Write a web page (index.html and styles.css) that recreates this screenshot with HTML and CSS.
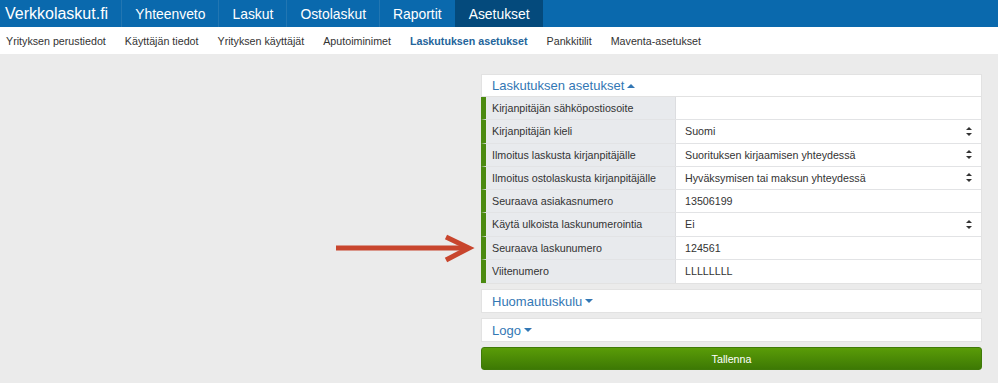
FILE: index.html
```html
<!DOCTYPE html>
<html lang="fi">
	<head>
		<meta charset="utf-8">
		<title>Laskutuksen asetukset - Verkkolaskut.fi</title>
		<link rel="stylesheet" href="styles.css">
	</head>
	<body>
		<div class="topnav">
			<a class="brand" href="#">Verkkolaskut.fi</a>
			<a class="nav-item" href="#">Yhteenveto</a>
			<a class="nav-item" href="#">Laskut</a>
			<a class="nav-item" href="#">Ostolaskut</a>
			<a class="nav-item" href="#">Raportit</a>
			<a class="nav-item active" href="#">Asetukset</a>
		</div>
		<div class="subnav">
			<a href="#">Yrityksen perustiedot</a>
			<a href="#">Käyttäjän tiedot</a>
			<a href="#">Yrityksen käyttäjät</a>
			<a href="#">Aputoiminimet</a>
			<a href="#" class="current">Laskutuksen asetukset</a>
			<a href="#">Pankkitilit</a>
			<a href="#">Maventa-asetukset</a>
		</div>

		<div class="content">
			<svg class="pointer" width="150" height="34" viewBox="0 0 150 34">
				<line x1="0" y1="17" x2="132" y2="17" stroke="#c8452d" stroke-width="5"/>
				<polyline points="110,6 133,17 110,29" fill="none" stroke="#c8452d" stroke-width="5" stroke-linejoin="miter"/>
			</svg>

			<form class="settings">
				<div class="panel">
					<div class="panel-title">Laskutuksen asetukset <span class="caret up"></span></div>
					<div class="row">
						<div class="label">Kirjanpitäjän sähköpostiosoite</div>
						<div class="field"></div>
					</div>
					<div class="row">
						<div class="label">Kirjanpitäjän kieli</div>
						<div class="field select">Suomi <span class="updown"></span></div>
					</div>
					<div class="row">
						<div class="label">Ilmoitus laskusta kirjanpitäjälle</div>
						<div class="field select">Suorituksen kirjaamisen yhteydessä <span class="updown"></span></div>
					</div>
					<div class="row">
						<div class="label">Ilmoitus ostolaskusta kirjanpitäjälle</div>
						<div class="field select">Hyväksymisen tai maksun yhteydessä <span class="updown"></span></div>
					</div>
					<div class="row">
						<div class="label">Seuraava asiakasnumero</div>
						<div class="field">13506199</div>
					</div>
					<div class="row">
						<div class="label">Käytä ulkoista laskunumerointia</div>
						<div class="field select">Ei <span class="updown"></span></div>
					</div>
					<div class="row">
						<div class="label">Seuraava laskunumero</div>
						<div class="field">124561</div>
					</div>
					<div class="row">
						<div class="label">Viitenumero</div>
						<div class="field">LLLLLLLL</div>
					</div>
				</div>

				<div class="panel">
					<div class="panel-title closed">Huomautuskulu <span class="caret"></span></div>
				</div>
				<div class="panel">
					<div class="panel-title closed">Logo <span class="caret"></span></div>
				</div>

				<button type="button" class="btn-save">Tallenna</button>
			</form>
		</div>
	</body>
</html>
```
FILE: styles.css
```css
* {
	font-family: "Liberation Sans", Arial, sans-serif;
	box-sizing: border-box;
}
body {
	margin: 0;
	background-color: #ebebeb;
	color: #333;
}
a {
	text-decoration: none;
}

/* ylapalkki */
.topnav {
	display: flex;
	height: 27px;
	background-color: #0a69ad;
}
.topnav a {
	display: flex;
	align-items: center;
	color: #fff;
}
.brand {
	font-size: 16px;
	padding: 0 13px 0 5px;
}
.nav-item {
	font-size: 13.9px;
	padding: 0 13px;
	border-left: 1px solid #2276b2;
}
.nav-item.active {
	background-color: #044a7c;
	border-left-color: #044a7c;
}

/* alavalikko */
.subnav {
	display: flex;
	gap: 19px;
	height: 27px;
	align-items: center;
	padding: 0 6px;
	background-color: #fff;
}
.subnav a {
	font-size: 10.7px;
	color: #333;
}
.subnav a.current {
	color: #24649a;
	font-weight: bold;
}

.content {
	position: relative;
	display: flex;
	justify-content: flex-end;
	padding: 20px 16px 0 0;
}
.pointer {
	position: absolute;
	left: 336px;
	top: 177px;
}
.settings {
	width: 501px;
	display: flex;
	flex-direction: column;
	gap: 5px;
}

.panel {
	background-color: #fff;
	border: 1px solid #e2e2e2;
}
.panel-title {
	display: flex;
	align-items: center;
	height: 22px;
	padding-left: 10px;
	font-size: 13px;
	color: #3377b4;
	border-bottom: 1px solid #e2e2e2;
}
.panel-title.closed {
	border-bottom: none;
}
.caret {
	display: inline-block;
	margin-left: 3px;
	border-left: 4px solid transparent;
	border-right: 4px solid transparent;
	border-top: 4px solid #3377b4;
}
.caret.up {
	border-top: none;
	border-bottom: 4px solid #3377b4;
}

.row {
	display: grid;
	grid-template-columns: 190px 1fr;
	height: 23.25px;
	margin-left: -1px;
	border-left: 5px solid #4b8a10;
	border-bottom: 1px solid #e2e3e5;
	font-size: 10.7px;
}
.row:last-child {
	border-bottom: none;
}
.label {
	display: flex;
	align-items: center;
	padding-left: 6px;
	background-color: #e8eaed;
	border-right: 1px solid #dcdde0;
}
.field {
	display: flex;
	align-items: center;
	justify-content: space-between;
	padding: 0 9px;
	background-color: #fff;
}
.updown {
	width: 6px;
	height: 9px;
	position: relative;
}
.updown::before,
.updown::after {
	content: "";
	position: absolute;
	left: 0;
	border-left: 3px solid transparent;
	border-right: 3px solid transparent;
}
.updown::before {
	top: 0;
	border-bottom: 3.5px solid #333;
}
.updown::after {
	bottom: 0;
	border-top: 3.5px solid #333;
}

.btn-save {
	height: 23px;
	border: 1px solid #3f7a08;
	border-radius: 3px;
	background: linear-gradient(#5a9c08, #3d7904);
	color: #fff;
	font-size: 10.7px;
	cursor: pointer;
}
```
